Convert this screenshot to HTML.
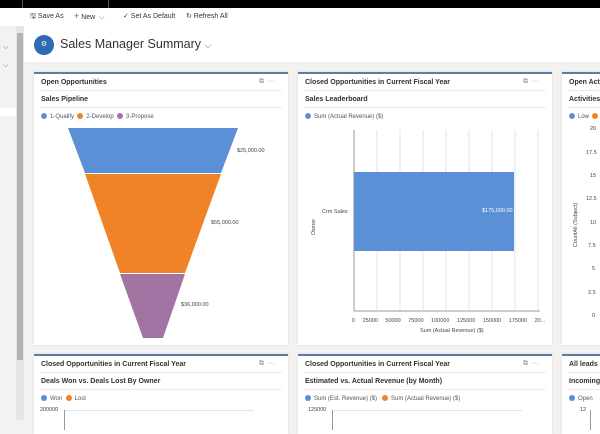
<!DOCTYPE html>
<html><head><style>
*{margin:0;padding:0;box-sizing:border-box}
body{width:600px;height:420px;overflow:hidden;background:#f3f2f1;font-family:"Liberation Sans",sans-serif;position:relative;color:#323130}
.abs{position:absolute}
.card{position:absolute;background:#fff;border-top:2px solid #5a7ea6;box-shadow:0 0 2px rgba(0,0,0,.12);overflow:hidden}
.ct{position:absolute;left:7px;top:5px;font-size:7px;font-weight:bold;color:#323130;white-space:nowrap}
.cs{position:absolute;left:7px;top:22px;font-size:7px;font-weight:bold;color:#323130;white-space:nowrap}
.hl{position:absolute;left:6px;right:6px;height:1px;background:#edebe9}
.lg{position:absolute;top:39px;left:7px;font-size:6px;color:#555;white-space:nowrap}
.dot{display:inline-block;width:6px;height:6px;border-radius:50%;vertical-align:-1px;margin-right:3px}
.ic{position:absolute;top:4px;font-size:7px;color:#888}
.sm{font-size:5.5px;color:#444;position:absolute;white-space:nowrap}
</style></head><body>
<div class="abs" style="left:0;top:0;width:600px;height:8px;background:#000"></div>
<div class="abs" style="left:22px;top:0;width:1px;height:8px;background:#555"></div>
<div class="abs" style="left:108px;top:0;width:1px;height:8px;background:#555"></div>
<div class="abs" style="left:0;top:8px;width:600px;height:18px;background:#fff;font-size:7px;color:#333">
<span class="abs" style="left:30px;top:4px">🖫 Save As</span>
<span class="abs" style="left:74px;top:3px"><span style="font-size:9px;color:#666">+</span> New &nbsp;<span style="color:#666">⌵</span></span>
<span class="abs" style="left:123px;top:4px">✓ Set As Default</span>
<span class="abs" style="left:186px;top:4px">↻ Refresh All</span>
</div>
<div class="abs" style="left:0;top:26px;width:16px;height:394px;background:#f3f2f1"></div>
<div class="abs" style="left:0;top:108px;width:16px;height:8px;background:#fff"></div>
<div class="abs" style="left:3px;top:44px;font-size:7px;color:#666">⌵</div>
<div class="abs" style="left:3px;top:62px;font-size:7px;color:#666">⌵</div>
<div class="abs" style="left:16px;top:26px;width:8px;height:394px;background:#e6e6e6"></div>
<div class="abs" style="left:17px;top:33px;width:6px;height:327px;background:#b3b3b3"></div>
<div class="abs" style="left:24px;top:26px;width:576px;height:36px;background:#fff"></div>
<div class="abs" style="left:34px;top:35px;width:20px;height:20px;border-radius:50%;background:#2f6bb0;color:#fff;font-size:7px;text-align:center;line-height:20px">⚙</div>
<div class="abs" style="left:60px;top:37px;font-size:12.5px;color:#333">Sales Manager Summary <span style="font-size:9px;color:#666">⌵</span></div>

<div class="card" style="left:34px;top:72px;width:254px;height:273px">
<div class="ct">Open Opportunities</div><div class="ic" style="left:225px">⧉ &nbsp;···</div>
<div class="hl" style="top:16px"></div>
<div class="cs">Sales Pipeline</div>
<div class="hl" style="top:33px"></div>
<div class="lg"><span class="dot" style="background:#5b8fd6"></span>1-Qualify &nbsp;<span class="dot" style="background:#f08328"></span>2-Develop &nbsp;<span class="dot" style="background:#a274a4"></span>3-Propose</div>
<svg class="abs" style="left:0;top:0" width="254" height="273">
<polygon points="34,54 204,54 187,99 51,99" fill="#5b8fd6"/>
<polygon points="51,100 187,100 151,199 86,199" fill="#f08328"/>
<polygon points="86,200 151,200 129,264 109,264" fill="#a274a4"/>
</svg>
<div class="sm" style="left:203px;top:74px">$25,000.00</div>
<div class="sm" style="left:177px;top:146px">$55,000.00</div>
<div class="sm" style="left:147px;top:228px">$36,000.00</div>
</div>

<div class="card" style="left:298px;top:72px;width:254px;height:273px">
<div class="ct">Closed Opportunities in Current Fiscal Year</div><div class="ic" style="left:225px">⧉ &nbsp;···</div>
<div class="hl" style="top:16px"></div>
<div class="cs">Sales Leaderboard</div>
<div class="hl" style="top:33px"></div>
<div class="lg"><span class="dot" style="background:#5b8fd6"></span>Sum (Actual Revenue) ($)</div>
<svg class="abs" style="left:0;top:0" width="254" height="273">
<g stroke="#dde6f2" stroke-width="1">
<line x1="79" y1="56" x2="79" y2="236"/><line x1="102" y1="56" x2="102" y2="236"/><line x1="125" y1="56" x2="125" y2="236"/><line x1="148" y1="56" x2="148" y2="236"/><line x1="171" y1="56" x2="171" y2="236"/><line x1="194" y1="56" x2="194" y2="236"/><line x1="217" y1="56" x2="217" y2="236"/><line x1="240" y1="56" x2="240" y2="236"/></g>
<line x1="56" y1="56" x2="56" y2="237" stroke="#999"/><line x1="56" y1="237" x2="242" y2="237" stroke="#999"/>
<rect x="56" y="98" width="160" height="79" fill="#5b8fd6"/>
</svg>
<div class="sm" style="left:184px;top:134px;color:#fff">$175,000.00</div>
<div class="sm" style="left:24px;top:135px">Crm Sales</div>
<div class="sm" style="left:8px;top:150px;transform:rotate(-90deg)">Owner</div>
<div class="sm" style="left:54px;top:244px;word-spacing:6px">0 25000 50000 75000 100000 125000 150000 175000 20...</div>
<div class="sm" style="left:122px;top:254px">Sum (Actual Revenue) ($)</div>
</div>

<div class="card" style="left:562px;top:72px;width:60px;height:273px">
<div class="ct">Open Activities</div>
<div class="hl" style="top:16px"></div>
<div class="cs">Activities by</div>
<div class="hl" style="top:33px"></div>
<div class="lg"><span class="dot" style="background:#5b8fd6"></span>Low &nbsp;<span class="dot" style="background:#f08328"></span></div>
<div class="sm" style="left:28px;top:52px">20</div>
<div class="sm" style="left:24px;top:76px">17.5</div>
<div class="sm" style="left:28px;top:99px">15</div>
<div class="sm" style="left:24px;top:122px">12.5</div>
<div class="sm" style="left:28px;top:146px">10</div>
<div class="sm" style="left:26px;top:169px">7.5</div>
<div class="sm" style="left:30px;top:192px">5</div>
<div class="sm" style="left:26px;top:216px">2.5</div>
<div class="sm" style="left:30px;top:239px">0</div>
<div class="sm" style="left:-8px;top:148px;transform:rotate(-90deg)">CountAll (Subject)</div>
</div>

<div class="card" style="left:34px;top:354px;width:254px;height:80px">
<div class="ct">Closed Opportunities in Current Fiscal Year</div><div class="ic" style="left:225px">⧉ &nbsp;···</div>
<div class="hl" style="top:16px"></div>
<div class="cs">Deals Won vs. Deals Lost By Owner</div>
<div class="hl" style="top:33px"></div>
<div class="lg"><span class="dot" style="background:#5b8fd6"></span>Won &nbsp;<span class="dot" style="background:#f08328"></span>Lost</div>
<div class="sm" style="left:6px;top:51px">200000</div>
<div class="abs" style="left:30px;top:54px;width:190px;height:1px;background:#dde6f2"></div>
<div class="abs" style="left:30px;top:54px;width:1px;height:20px;background:#999"></div>
</div>
<div class="card" style="left:298px;top:354px;width:254px;height:80px">
<div class="ct">Closed Opportunities in Current Fiscal Year</div><div class="ic" style="left:225px">⧉ &nbsp;···</div>
<div class="hl" style="top:16px"></div>
<div class="cs">Estimated vs. Actual Revenue (by Month)</div>
<div class="hl" style="top:33px"></div>
<div class="lg"><span class="dot" style="background:#5b8fd6"></span>Sum (Est. Revenue) ($) &nbsp;&nbsp;<span class="dot" style="background:#f08328"></span>Sum (Actual Revenue) ($)</div>
<div class="sm" style="left:10px;top:51px">125000</div>
<div class="abs" style="left:34px;top:54px;width:190px;height:1px;background:#dde6f2"></div>
<div class="abs" style="left:34px;top:54px;width:1px;height:20px;background:#999"></div>
</div>
<div class="card" style="left:562px;top:354px;width:60px;height:80px">
<div class="ct">All leads in</div>
<div class="hl" style="top:16px"></div>
<div class="cs">Incoming l</div>
<div class="hl" style="top:33px"></div>
<div class="lg"><span class="dot" style="background:#5b8fd6"></span>Open</div>
<div class="sm" style="left:18px;top:51px">12</div>
<div class="abs" style="left:28px;top:54px;width:1px;height:20px;background:#999"></div>
</div>
</body></html>
